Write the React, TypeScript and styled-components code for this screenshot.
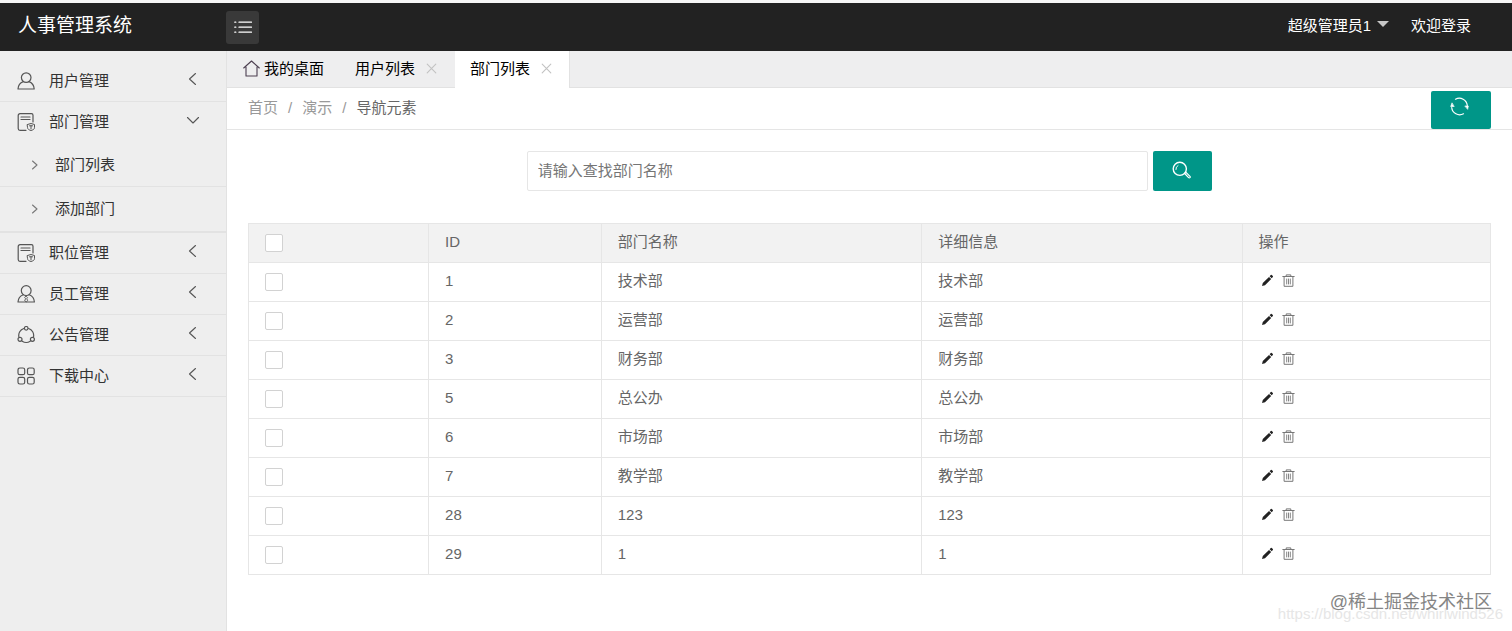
import React from "react";
import styled, { createGlobalStyle } from "styled-components";

const GlobalStyle = createGlobalStyle`
  *, *::before, *::after { box-sizing: border-box; }
  body {
    margin: 0;
    background: #fff;
    color: #333;
    font: 15px/20px "Liberation Sans", "Noto Sans CJK SC", sans-serif;
  }
  a { color: inherit; text-decoration: none; }
  button, input { font: inherit; }
`;

const Page = styled.div`
  position: relative;
  display: flex;
  flex-direction: column;
  min-height: 100vh;
`;

const TopBar = styled.header`
  display: flex;
  align-items: center;
  height: 51px;
  padding: 0 41px 2px 18px;
  border-top: 3px solid #f6f6f6;
  background: #222;
  color: #fff;
`;

const Brand = styled.h1`
  width: 208px;
  margin: 0;
  font-size: 19px;
  font-weight: 400;
  line-height: 24px;
`;

const MenuToggle = styled.button`
  display: flex;
  align-items: center;
  justify-content: center;
  width: 33px;
  height: 33px;
  margin-top: 2px;
  padding: 0;
  border: 0;
  border-radius: 3px;
  background: #393939;
  color: #fff;
`;

const UserLinks = styled.nav`
  display: flex;
  gap: 22px;
  margin-left: auto;
`;

const UserLink = styled.a`
  display: flex;
  gap: 6px;
`;

const Caret = styled.span`
  width: 0;
  height: 0;
  margin-top: 5px;
  border: 6px solid transparent;
  border-top-color: #c6c6c6;
`;

const Body = styled.div`
  display: flex;
  flex: 1;
`;

const Sidebar = styled.nav`
  flex: 0 0 227px;
  padding-top: 10px;
  border-right: 1px solid #e2e2e2;
  background: #eee;
`;

const List = styled.ul`
  margin: 0;
  padding: 0;
  list-style: none;
`;

const SubList = styled(List)`
  border-bottom: 2px solid #e2e2e2;
`;

const MenuLink = styled.a<{ $open?: boolean }>`
  display: flex;
  align-items: center;
  height: 41px;
  padding: 0 26px 0 17px;
  border-bottom: 1px solid ${(p) => (p.$open ? "transparent" : "#e2e2e2")};

  > svg:first-child { margin-right: 14px; color: #555; }
  > svg:last-child { margin: 0 0 4px auto; color: #555; }
`;

const SubLink = styled.a`
  display: flex;
  align-items: center;
  gap: 13px;
  height: 44px;
  padding-left: 27px;
  border-bottom: 1px solid #e2e2e2;

  li:last-child > & { border-bottom-color: transparent; }
  svg { color: #777; }
`;

const Main = styled.main`
  flex: 1;
  min-width: 0;
`;

const Tabs = styled.div`
  display: flex;
  height: 37px;
  padding-left: 1px;
  border-bottom: 1px solid #e2e2e2;
  background: #eeeeef;
  color: #000;
`;

const Tab = styled.div<{ $active?: boolean }>`
  display: flex;
  align-items: center;
  gap: 11px;
  height: 37px;
  padding: 0 15px 2px;
  border-right: 1px solid ${(p) => (p.$active ? "#e2e2e2" : "transparent")};
  background: ${(p) => (p.$active ? "#fff" : "transparent")};
`;

const TabLabel = styled.a`
  display: flex;
  align-items: center;
  gap: 4px;
`;

const TabClose = styled.button`
  display: flex;
  padding: 0 2px 0 0;
  border: 0;
  background: none;
  color: #c2c2c2;
`;

const CrumbBar = styled.div`
  display: flex;
  align-items: flex-end;
  justify-content: space-between;
  height: 42px;
  padding: 0 21px;
  border-bottom: 1px solid #e5e5e5;
`;

const Crumbs = styled.nav`
  display: flex;
  align-self: center;
  gap: 10px;
  padding-bottom: 2px;
  color: #999;
`;

const CurrentCrumb = styled.a`
  color: #666;
`;

const TealButton = styled.button<{ $flat?: boolean }>`
  display: flex;
  flex: 0 0 auto;
  align-items: ${(p) => (p.$flat ? "flex-start" : "center")};
  justify-content: center;
  width: ${(p) => (p.$flat ? 60 : 59)}px;
  height: ${(p) => (p.$flat ? 38 : 40)}px;
  padding: ${(p) => (p.$flat ? "6px 3px 0 0" : "0 3px 2px 0")};
  border: 0;
  border-radius: 2px;
  background: #009688;
  color: #fff;
`;

const Content = styled.div`
  padding: 21px;
`;

const SearchForm = styled.form`
  display: flex;
  justify-content: center;
  gap: 5px;
`;

const SearchInput = styled.input`
  width: 50%;
  height: 40px;
  padding: 0 10px 2px;
  border: 1px solid #e6e6e6;
  border-radius: 2px;
  outline: 0;
  background: #fff;

  &::placeholder { color: #757575; opacity: 1; }
`;

const Table = styled.table`
  width: 100%;
  margin-top: 32px;
  border-collapse: collapse;
  table-layout: fixed;
  color: #666;
`;

const Col = styled.col<{ $share: number }>`
  width: ${(p) => p.$share}%;
`;

const HeadRow = styled.tr`
  background: #f2f2f2;
`;

const cell = `
  height: 39px;
  padding: 0 15px 2px 16px;
  border: 1px solid #e6e6e6;
  font-weight: 400;
  text-align: left;
`;

const HeadCell = styled.th`${cell}`;
const Cell = styled.td`${cell}`;

const Check = styled.input`
  display: block;
  width: 18px;
  height: 18px;
  margin: 2px 0 0;
  border: 1px solid #d2d2d2;
  border-radius: 2px;
  background: #fff;
  appearance: none;
`;

const Actions = styled.div`
  display: flex;
  align-items: center;
  gap: 8px;
  padding: 0 0 2px 2px;
`;

const Action = styled.button<{ $dark?: boolean }>`
  display: flex;
  padding: 0;
  border: 0;
  background: none;
  color: ${(p) => (p.$dark ? "#222" : "#777")};
`;

const Watermark = styled.div`
  position: absolute;
  right: 20px;
  bottom: 17px;
  color: #858585;
  font-size: 18px;
  line-height: 24px;
`;

const SourceMark = styled(Watermark)`
  right: 9px;
  bottom: 5px;
  color: #e6e6e6;
  font-size: 15px;
`;

type IconProps = { size?: number; width?: number; children: React.ReactNode };

const Icon = ({ size = 18, width = 1, children }: IconProps) => (
  <svg
    width={size}
    height={size}
    viewBox={`0 0 ${size} ${size}`}
    fill="none"
    stroke="currentColor"
    strokeWidth={width}
    strokeLinecap="round"
    strokeLinejoin="round"
    aria-hidden="true"
  >
    {children}
  </svg>
);

const UserIcon = () => (
  <Icon width={1.2}>
    <circle cx="9.2" cy="5.6" r="4.8" />
    <path d="M6.3 9.6C3.2 10.8 1.2 13.2 1 17h16.2c-.2-3.8-2.2-6.2-5.2-7.4" />
  </Icon>
);

const FormIcon = () => (
  <Icon width={1.2}>
    <path d="M9 17.3H3A1.8 1.8 0 0 1 1.2 15.500V2.500A1.800 1.800 0 0 1 3 .7h11.500a1.500 1.500 0 0 1 1.500 1.500V9" />
    <path d="M4 4h9M4 6.500h9" />
    <path d="M10.500 11.500l3.500-1 3.500 1v3.200c0 1.600-1.700 2.300-3.500 2.800-1.800-.5-3.500-1.200-3.500-2.800z" strokeWidth="1" />
    <path d="M12.500 12.800h3M14 12.800v3" strokeWidth="1" />
  </Icon>
);

const StaffIcon = () => (
  <Icon width={1.2}>
    <circle cx="9.2" cy="5.6" r="4.9" />
    <path d="M6.3 9.8C3.2 11 1.2 13.2 1 17h16.4c-.2-3.8-2.2-6-5.200-7.200" />
    <path d="M9.2 11.3l1.300 1.400-.7 1 .9 2-1.500 1.200-1.500-1.200.9-2-.7-1z" strokeWidth=".9" />
  </Icon>
);

const ShareIcon = () => (
  <Icon width={1.2}>
    <path d="M6.8 2.500A7.300 7.300 0 0 0 1.900 11M11.600 2.500A7.300 7.300 0 0 1 16.500 11M5.200 15.200a7.300 7.300 0 0 0 8 0" />
    <circle cx="9.2" cy="2.3" r="1.8" />
    <circle cx="3" cy="13.3" r="2" />
    <circle cx="15.4" cy="13.3" r="2" />
  </Icon>
);

const GridIcon = () => (
  <Icon width={1.2}>
    <rect x="1" y="1" width="6.7" height="6.7" rx="1.8" />
    <rect x="10.5" y="1" width="6.7" height="6.7" rx="1.8" />
    <rect x="1" y="10.3" width="6.7" height="6.7" rx="1.8" />
    <rect x="10.5" y="10.3" width="6.7" height="6.7" rx="1.8" />
  </Icon>
);

const ChevronLeft = () => (
  <Icon size={14} width={1.1}><path d="M9.500 1.500L3.500 7l6 5.500" /></Icon>
);

const ChevronDown = () => (
  <Icon size={14} width={1.1}><path d="M1.500 4.500L7 10l5.500-5.500" /></Icon>
);

const ChevronRight = () => (
  <Icon size={15} width={1.1}><path d="M5.500 4l4.500 4-4.500 4" /></Icon>
);

const MenuIcon = () => (
  <Icon size={18} width={1.3}>
    <path d="M5 4.200h12.500M5 9.200h12.500M5 14.200h12.500" />
    <path d="M.8 4.200h1M.8 9.200h1M.8 14.200h1" />
  </Icon>
);

const HomeIcon = () => (
  <Icon size={17} width={1.1}>
    <path d="M.7 8L8.500 1l7.800 7M3 7v9h11V7" stroke="#4c3f50" />
  </Icon>
);

const CloseIcon = () => (
  <Icon size={11} width={1.1}><path d="M1.200 1.200l8.600 8.600M9.800 1.200L1.200 9.800" /></Icon>
);

const RefreshIcon = () => (
  <Icon size={19} width={1.2}>
    <path d="M5.500 2.200A8 8 0 0 1 17.300 8.500M13.500 16.800A8 8 0 0 1 1.700 10.500" />
    <path d="M15.200 9h3.100l-.6 3zM3.800 9.500H.7l1.200-3.300z" fill="currentColor" strokeWidth=".7" />
  </Icon>
);

const SearchIcon = () => (
  <Icon size={19} width={1.4}>
    <circle cx="7.8" cy="7.8" r="6.6" />
    <path d="M3.900 8.500A4 4 0 0 1 6 4.500" strokeWidth="1" />
    <path d="M12.700 12.500l1.300-1.200 4 4a.9.900 0 0 1-1.400 1.400z" strokeWidth="1.2" />
  </Icon>
);

const PencilIcon = () => (
  <Icon size={13}>
    <path d="M1 12l.8-3L8 2.900l2.200 2.200L4 11.200zM8.600 2.300l1.200-1.200q.7-.5 1.300.1l.7.7q.5.600 0 1.200l-1 1.200z" fill="currentColor" stroke="none" />
  </Icon>
);

const TrashIcon = () => (
  <Icon size={13} width={1}>
    <path d="M.8 2.500h11.400M4.200 2.300V.9h4.600v1.400M2.100 2.800v9.500h8.800V2.800" />
    <path d="M4.700 5v5M6.500 5v5M8.300 5v5" strokeWidth=".9" />
  </Icon>
);

const menu = [
  { label: "用户管理", icon: <UserIcon /> },
  { label: "部门管理", icon: <FormIcon />, children: ["部门列表", "添加部门"] },
  { label: "职位管理", icon: <FormIcon /> },
  { label: "员工管理", icon: <StaffIcon /> },
  { label: "公告管理", icon: <ShareIcon /> },
  { label: "下载中心", icon: <GridIcon /> },
];

const departments = [
  { id: 1, name: "技术部" },
  { id: 2, name: "运营部" },
  { id: 3, name: "财务部" },
  { id: 5, name: "总公办" },
  { id: 6, name: "市场部" },
  { id: 7, name: "教学部" },
  { id: 28, name: "123" },
  { id: 29, name: "1" },
];

export default function App() {
  return (
    <>
      <GlobalStyle />
      <Page>
        <TopBar>
          <Brand>人事管理系统</Brand>
          <MenuToggle type="button" aria-label="菜单"><MenuIcon /></MenuToggle>
          <UserLinks>
            <UserLink href="#user">超级管理员1<Caret /></UserLink>
            <UserLink href="#welcome">欢迎登录</UserLink>
          </UserLinks>
        </TopBar>
        <Body>
          <Sidebar>
            <List>
              {menu.map((item) => (
                <li key={item.label}>
                  <MenuLink href="#menu" $open={!!item.children}>
                    {item.icon}
                    {item.label}
                    {item.children ? <ChevronDown /> : <ChevronLeft />}
                  </MenuLink>
                  {item.children && (
                    <SubList>
                      {item.children.map((label) => (
                        <li key={label}>
                          <SubLink href="#list"><ChevronRight />{label}</SubLink>
                        </li>
                      ))}
                    </SubList>
                  )}
                </li>
              ))}
            </List>
          </Sidebar>
          <Main>
            <Tabs>
              <Tab><TabLabel href="#home"><HomeIcon />我的桌面</TabLabel></Tab>
              <Tab>
                <TabLabel href="#users">用户列表</TabLabel>
                <TabClose type="button" aria-label="关闭"><CloseIcon /></TabClose>
              </Tab>
              <Tab $active>
                <TabLabel href="#departments">部门列表</TabLabel>
                <TabClose type="button" aria-label="关闭"><CloseIcon /></TabClose>
              </Tab>
            </Tabs>
            <CrumbBar>
              <Crumbs>
                <a href="#index">首页</a>
                <span>/</span>
                <a href="#demo">演示</a>
                <span>/</span>
                <CurrentCrumb href="#nav">导航元素</CurrentCrumb>
              </Crumbs>
              <TealButton type="button" $flat aria-label="刷新"><RefreshIcon /></TealButton>
            </CrumbBar>
            <Content>
              <SearchForm onSubmit={(e) => e.preventDefault()}>
                <SearchInput type="text" placeholder="请输入查找部门名称" aria-label="部门名称" />
                <TealButton type="submit" aria-label="搜索"><SearchIcon /></TealButton>
              </SearchForm>
              <Table>
                <colgroup>
                  <Col $share={14.5} />
                  <Col $share={13.9} />
                  <Col $share={25.8} />
                  <Col $share={25.8} />
                  <Col $share={20} />
                </colgroup>
                <thead>
                  <HeadRow>
                    <HeadCell><Check type="checkbox" aria-label="全选" /></HeadCell>
                    <HeadCell>ID</HeadCell>
                    <HeadCell>部门名称</HeadCell>
                    <HeadCell>详细信息</HeadCell>
                    <HeadCell>操作</HeadCell>
                  </HeadRow>
                </thead>
                <tbody>
                  {departments.map((d) => (
                    <tr key={d.id}>
                      <Cell><Check type="checkbox" aria-label={`选择 ${d.name}`} /></Cell>
                      <Cell>{d.id}</Cell>
                      <Cell>{d.name}</Cell>
                      <Cell>{d.name}</Cell>
                      <Cell>
                        <Actions>
                          <Action type="button" $dark aria-label="编辑"><PencilIcon /></Action>
                          <Action type="button" aria-label="删除"><TrashIcon /></Action>
                        </Actions>
                      </Cell>
                    </tr>
                  ))}
                </tbody>
              </Table>
            </Content>
          </Main>
        </Body>
        <SourceMark>https://blog.csdn.net/whirlwind526</SourceMark>
        <Watermark>@稀土掘金技术社区</Watermark>
      </Page>
    </>
  );
}
